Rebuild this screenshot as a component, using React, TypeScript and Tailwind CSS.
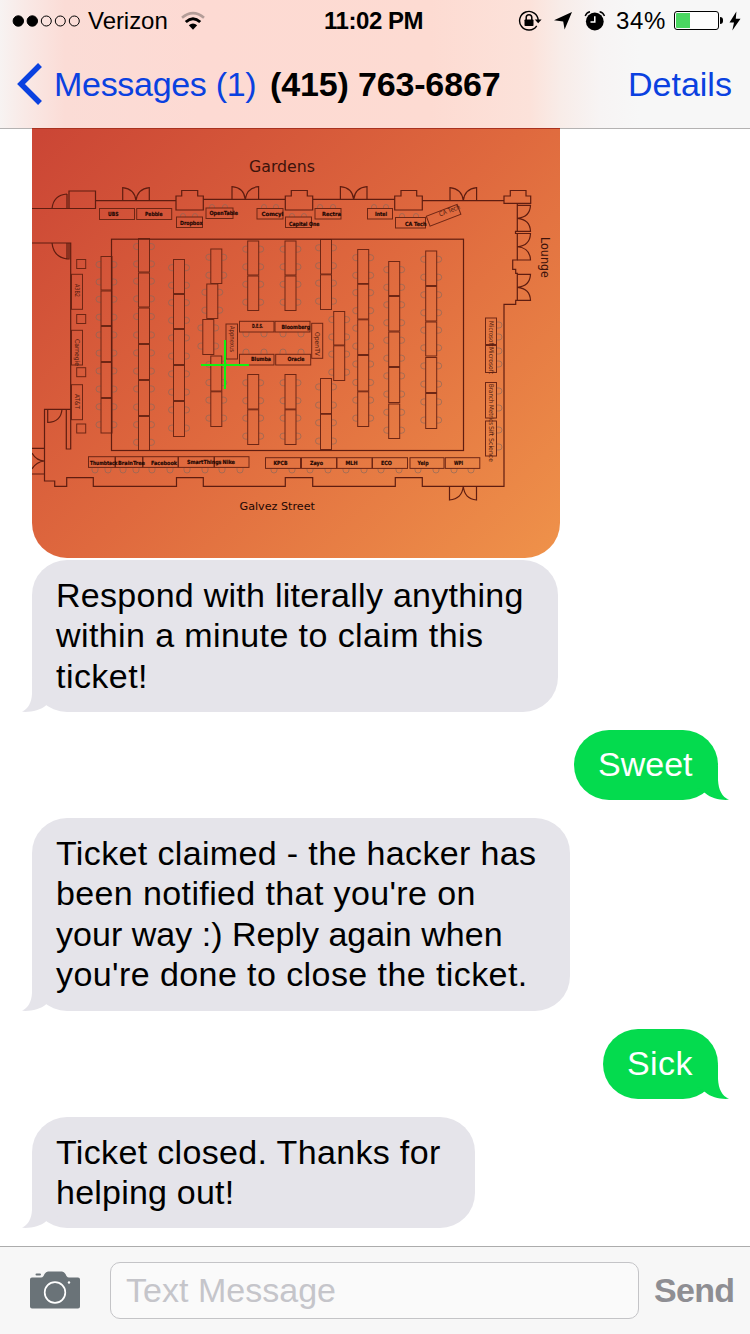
import React from "react";

type Column = { x: number; w?: number; tables: [number, number][] };

const columns: Column[] = [
  { x: 101, tables: [[256.5, 290], [291, 325.5], [326.5, 361.5], [362.5, 397.5], [398.5, 433]] },
  { x: 138.5, tables: [[238.5, 272], [273, 307], [308, 343.5], [344.5, 379.5], [380.5, 415.5], [416.5, 450.5]] },
  { x: 173.5, tables: [[259.5, 293.5], [294.5, 328.5], [329.5, 364.5], [365.5, 400.5], [401.5, 436.5]] },
  { x: 210.8, tables: [[249, 283.5], [356, 391], [391.8, 426.5]] },
  { x: 206.8, tables: [[284, 318.5]] },
  { x: 202.8, tables: [[319.5, 354.5]] },
  { x: 247.7, tables: [[241, 275], [276, 310.5], [374.5, 409], [409.8, 444.5]] },
  { x: 285, tables: [[241, 275], [276, 310.5], [374.5, 409], [409.8, 444.5]] },
  { x: 320.5, tables: [[239.5, 274], [274.8, 309.5], [378.5, 413.5], [414.3, 449.5]] },
  { x: 333.7, tables: [[311.5, 345], [345.8, 380.5]] },
  { x: 357.7, tables: [[249.5, 283.5], [284.3, 319], [319.8, 354.5], [355.5, 391], [391.8, 426.5]] },
  { x: 388.7, tables: [[261.5, 295.5], [296.5, 331], [332, 366.5], [367.5, 402.5], [404, 438.5]] },
  { x: 425.7, tables: [[251, 285.5], [286.5, 321], [322, 356], [357.5, 392.5], [393.5, 428.5]] },
];

// x, y, width, height
const booths: [number, number, number, number][] = [
  [99.5, 208.5, 35, 11], [136.7, 208.5, 35, 11], [176.5, 217, 26, 10.5], [206, 208, 27, 10.5],
  [257, 208.5, 26, 10.5], [285.5, 217, 26, 10.5], [315, 208.5, 26, 10.5], [367.5, 208.5, 25, 10.5], [395.5, 217.5, 30, 10.5],
  [239.5, 321.3, 34.5, 10.7], [275, 321.3, 35, 10.7], [239.5, 354.3, 34.5, 10.7], [275.7, 354.3, 35, 10.7],
  [226, 324, 11.5, 35], [311.7, 323.3, 11, 35],
  [88.5, 456.7, 26.5, 10.7], [115.5, 456.7, 27, 10.7], [143, 456.7, 35, 10.7], [178.5, 456.7, 35.5, 10.7], [214.5, 456.7, 34.5, 10.7],
  [265.5, 457.7, 35, 10.7], [301.5, 457.7, 35, 10.7], [337, 457.7, 35, 10.7], [372.5, 457.7, 35, 10.7], [410, 457.7, 34, 10.7], [445.3, 457.7, 34.5, 10.7],
  [71.5, 274.3, 11, 35], [71.5, 330.3, 11, 34.7], [71.5, 384.7, 11, 35],
  [485.5, 318, 11, 26.5], [485.5, 345.5, 11, 27], [485.5, 382.5, 11, 35.5], [485.5, 421, 11, 35],
  [76.7, 259.5, 9, 9], [76.7, 314.5, 9, 9], [76.7, 367.7, 9, 9], [76.7, 424, 9, 9],
];

const labels: { t: string; x: number; y: number; w: number }[] = [
  { t: "UBS", x: 108, y: 216, w: 10.5 }, { t: "Pebble", x: 145, y: 216, w: 17.5 },
  { t: "Dropbox", x: 180, y: 225, w: 22.5 }, { t: "OpenTable", x: 209.5, y: 215, w: 28.5 },
  { t: "Comcyl", x: 261.5, y: 216, w: 22 }, { t: "Capital One", x: 289, y: 225.5, w: 30.5 },
  { t: "Rectra", x: 322, y: 215.5, w: 19 }, { t: "Intel", x: 375, y: 215.5, w: 12 }, { t: "CA Tech", x: 405, y: 225.5, w: 21.5 },
  { t: "D.E.S.", x: 252, y: 328, w: 11 }, { t: "Bloomberg", x: 281.5, y: 329, w: 28.5 },
  { t: "Blumba", x: 251, y: 361, w: 20 }, { t: "Oracle", x: 287.5, y: 361, w: 17 },
  { t: "Thumbtack", x: 90, y: 464.5, w: 27.5 }, { t: "BrainTree", x: 118, y: 464.5, w: 27 }, { t: "Facebook", x: 151, y: 464.5, w: 26 },
  { t: "SmartThings", x: 187, y: 463.5, w: 34.5 }, { t: "Nike", x: 222.500, y: 463.5, w: 12.500 },
  { t: "KPCB", x: 273.5, y: 464.5, w: 14 }, { t: "Zayo", x: 310, y: 464.5, w: 13 }, { t: "MLH", x: 345.5, y: 464.5, w: 12 },
  { t: "ECO", x: 381, y: 464.5, w: 11 }, { t: "Yelp", x: 417.5, y: 464.5, w: 11 }, { t: "WPI", x: 454, y: 464.5, w: 9 },
];

const sideLabels: { t: string; x: number; y: number; w: number }[] = [
  { t: "A3B2", x: 75, y: 284, w: 13 }, { t: "Carnegie", x: 75, y: 339, w: 27 }, { t: "AT&T", x: 75, y: 394, w: 15 },
  { t: "Appnexus", x: 229.5, y: 326, w: 26 }, { t: "OpenTV", x: 315, y: 332, w: 24 },
  { t: "Microsoft", x: 489, y: 321, w: 25.500 }, { t: "Microsoft", x: 489, y: 347, w: 27 },
  { t: "Branch Metrics", x: 489, y: 384, w: 41 }, { t: "Sift Science", x: 489, y: 426, w: 36 },
];

const topDoors: [number, number, number][] = [
  [136, 187.7, 200.7], [245.3, 186.7, 199.3], [353.7, 186.7, 199.3], [463.3, 187.7, 200.7],
];

function FloorPlan() {
  return (
    <svg viewBox="32 129 528 429" width="528" height="429" className="block" fill="none">
      <defs>
        <linearGradient id="sunset" gradientUnits="userSpaceOnUse" x1="75" y1="100" x2="535" y2="580">
          <stop offset="0" stopColor="#cb4635" />
          <stop offset="0.5" stopColor="#df693e" />
          <stop offset="1" stopColor="#ef924a" />
        </linearGradient>
      </defs>
      <rect x="32" y="129" width="528" height="429" fill="url(#sunset)" />
      <g stroke="#80685e" strokeOpacity="0.75" strokeWidth="0.8">
        {columns.flatMap((c) =>
          c.tables.flatMap(([a, b]) =>
            [a + (b - a) * 0.24, a + (b - a) * 0.76].flatMap((y) => [
              <path key={`l${c.x}-${y}`} d={`M${c.x} ${y - 3}h-2a3 3 0 0 0 0 6h2`} />,
              <path key={`r${c.x}-${y}`} d={`M${c.x + 11} ${y - 3}h2a3 3 0 0 1 0 6h-2`} />,
            ])
          )
        )}
        {[95, 108, 123, 136, 152, 170, 187, 205, 222, 240, 274, 292, 310, 328, 346, 364, 381, 399, 418, 436, 454, 471].map((x) => (
          <path key={x} d={`M${x - 3} 468v2a3 3 0 0 0 6 0v-2`} />
        ))}
        {[212, 225, 264, 276, 320, 333, 374, 386].map((x) => (
          <path key={x} d={`M${x - 2.5} 208v-1a2.5 2.5 0 0 1 5 0v1`} />
        ))}
        {[183, 195, 292, 304, 402, 416].map((x) => (
          <path key={x} d={`M${x - 2.5} 217v-1a2.5 2.5 0 0 1 5 0v1`} />
        ))}
        {[246, 264, 283, 301].map((x) => (
          <path key={x} d={`M${x - 3} 332v2a3 3 0 0 0 6 0v-2M${x - 3} 354v-2a3 3 0 0 1 6 0v2`} />
        ))}
        {[325, 337, 351, 364, 391, 408, 430, 447].map((y) => (
          <path key={y} d={`M497 ${y - 3}h2a3 3 0 0 1 0 6h-2`} />
        ))}
      </g>
      <g stroke="#6e2614" strokeWidth="1">
        {columns.flatMap((c) =>
          c.tables.map(([a, b]) => <rect key={`${c.x}-${a}`} x={c.x} y={a} width="11" height={b - a} />)
        )}
        {booths.map(([x, y, w, h]) => (
          <rect key={`${x}-${y}`} x={x} y={y} width={w} height={h} />
        ))}
        <rect x="427" y="210" width="33" height="10.5" transform="rotate(-21 443.5 215)" />
      </g>
      <g stroke="#5f1d10" strokeWidth="1.2">
        <rect x="111.5" y="239.2" width="352" height="211.3" />
        <path d="M32 208.5H95.5V191H69V208.5M67 194V208.5M52 208.5Q53.5 195 67 194" />
        <path d="M95.5 200.7H176V196H181.7V190.5H197.7V196H203.3V210H176V200.7M203.3 199.3H285.3V196H291.3V190.5H307.3V196H312.7V210H285.3V199.3M312.7 199.3H394.7V196H401V190.5H416.7V196H422.3V210H394.7V199.3M422.3 200.7H504" />
        <path d="M504 203.3V196H510.3V190.5H526V196H530.7V203.3ZM517.3 203.3V231.3H515.5V233.5H517.3V260H512.7V269.3H515.7V273.3H517.3V300.3H515.7V304.3H504V486.3H422.3V477.7H395.3V486.3H312.7V477.7H285.3V486.3H203.3V477.7H176.5V486.3H93.3V477.7H66.7V486.3H54.7V481H44.5V409.3H71" />
        <path d="M32 243H70.7V449H66.3V409.3M67 243V259H69V243M52 243Q53.5 257 67 259M47.7 409.3V422.5Q61 422 62 409.3M32 448.3H44.5M32 474H44.5M32 453Q36 460.5 44.5 461Q36 462 32 469" />
        {topDoors.map(([x, t, b]) => (
          <path key={x} d={`M${x - 13.3} ${b}V${t}Q${x - 1.5} ${t + 1} ${x} ${b}Q${x + 1.5} ${t + 1} ${x + 13.3} ${t}V${b}`} />
        ))}
        <path d="M449.5 486.3V500Q462 499 463.3 486.3Q464.5 499 476.5 500V486.3" />
        {[[205.3, 231.3], [233.5, 260], [274.3, 300.3]].map(([a, b]) => (
          <path key={a} d={`M517.3 ${a}H530.5Q530 ${(a + b) / 2 - 1} 517.3 ${(a + b) / 2}Q530 ${(a + b) / 2 + 1} 530.5 ${b}H517.3`} />
        ))}
      </g>
      <g fill="#1d0703" className="font-['DejaVu_Sans','Open_Sans',sans-serif]">
        <text x="249" y="172" fontSize="16" textLength="66" lengthAdjust="spacingAndGlyphs" fill="#3d130b">Gardens</text>
        <text x="239.5" y="509.5" fontSize="10.5" textLength="75.5" lengthAdjust="spacingAndGlyphs">Galvez Street</text>
        <text transform="translate(541 237) rotate(90)" fontSize="11.5" textLength="41" lengthAdjust="spacingAndGlyphs" fill="#3d130b">Lounge</text>
        <g fontSize="5.6" fontWeight="700" stroke="#1d0703" strokeWidth="0.2">
          {labels.map((l) => (
            <text key={l.t} x={l.x} y={l.y} textLength={l.w} lengthAdjust="spacingAndGlyphs">{l.t}</text>
          ))}
        </g>
        <g fontSize="6.500" fill="#4f1a0e">
          {sideLabels.map((l) => (
            <text key={`${l.x}-${l.y}`} transform={`translate(${l.x} ${l.y}) rotate(90)`} textLength={l.w} lengthAdjust="spacingAndGlyphs">{l.t}</text>
          ))}
          <text transform="translate(440 216.5) rotate(-21)" textLength="22" lengthAdjust="spacingAndGlyphs">CA Tech</text>
        </g>
      </g>
      <path d="M201 365H249M225 340V389" stroke="#10f310" strokeWidth="2" />
    </svg>
  );
}

function Tail({ side }: { side: "left" | "right" }) {
  return side === "left" ? (
    <svg className="absolute -left-2.5 bottom-0" width="40" height="34" viewBox="0 0 40 34" fill="#e5e4ea">
      <path d="M10 0V16C9.500 25 6 31 0 33.8C9 34.4 18 32.500 24.500 27L40 20V0Z" />
    </svg>
  ) : (
    <svg className="absolute -right-[11px] bottom-0" width="40" height="34" viewBox="0 0 40 34" fill="#04db4e">
      <path d="M29 0V14C29.500 24 33 31 40 33.8C31 34.400 22.500 32.500 16 27L6 20V0Z" />
    </svg>
  );
}

function Incoming({ children, className }: { children: React.ReactNode; className: string }) {
  return (
    <div className={`relative ml-8 rounded-[35px] bg-[#e5e4ea] pl-6 text-black ${className}`}>
      <Tail side="left" />
      <p className="relative whitespace-nowrap pt-[14.6px] text-[34px] leading-[40.5px]">{children}</p>
    </div>
  );
}

function Outgoing({ children, className }: { children: React.ReactNode; className: string }) {
  return (
    <div className={`relative mr-8 h-[70px] self-end rounded-[35px] bg-[#04db4e] pl-6 pt-[14px] text-white ${className}`}>
      <Tail side="right" />
      <p className="relative whitespace-nowrap text-[34px] leading-[40.6px]">{children}</p>
    </div>
  );
}

function StatusBar() {
  return (
    <div className="flex h-10 items-center pt-px text-2xl">
      <svg className="ml-3" width="70" height="12" viewBox="0 0 70 12" stroke="#000" strokeWidth="1">
        <circle cx="6.300" cy="6" r="5.200" />
        <circle cx="20.300" cy="6" r="5.200" />
        <circle cx="34.300" cy="6" r="5" fill="none" />
        <circle cx="48.300" cy="6" r="5" fill="none" />
        <circle cx="62.300" cy="6" r="5" fill="none" />
      </svg>
      <span className="ml-[6px] w-[92px] tracking-[-0.05px]">Verizon</span>
      <svg width="26" height="20" viewBox="0 0 26 20" fill="none" strokeWidth="3">
        <path d="M2 6.800Q13 -2.600 24 6.800" stroke="#b49d98" strokeWidth="2.600" />
        <path d="M5.800 11Q13 4.600 20.200 11" stroke="#000" />
        <path d="M8.800 14.200Q13 10.600 17.200 14.200L13 18.800Z" fill="#000" />
      </svg>
      <span className="ml-[118px] w-[194px] font-bold tracking-[-0.45px]">11:02 PM</span>
      <svg width="24" height="22" viewBox="0 0 24 22" fill="none" stroke="#000" strokeWidth="1.400">
        <path d="M18.700 15.800A9.300 9.300 0 1 1 20.200 10.500" />
        <path d="M16.800 9.500H23.600L20.200 13.300Z" fill="#000" stroke="none" />
        <rect x="6.500" y="9.500" width="9" height="6.500" rx="0.800" fill="#000" stroke="none" />
        <path d="M8.200 10V7.500A2.800 2.800 0 0 1 13.800 7.500V10" strokeWidth="1.500" />
      </svg>
      <svg className="ml-3" width="18" height="18" viewBox="0 0 18 18">
        <path d="M18 0L10.600 17.600L9.200 9.400L0 8.200Z" />
      </svg>
      <svg className="ml-3" width="22" height="20" viewBox="0 0 22 20" fill="none">
        <circle cx="10.800" cy="10.500" r="8.900" fill="#000" />
        <path d="M10.800 5.200V11H6.500" stroke="#fff" strokeWidth="1.500" />
        <path d="M1.200 5Q2.500 1.500 6 0.800M15.600 0.800Q19.200 1.500 20.500 5" stroke="#000" strokeWidth="1.400" />
      </svg>
      <span className="ml-[10px] w-[58px] tracking-[0.6px]">34%</span>
      <div className="flex h-[19px] w-[45px] rounded-[3px] border border-black bg-[#fdfdfd] p-px">
        <div className="h-full w-[14px] rounded-l-[1px] bg-[#49d660]" />
      </div>
      <div className="ml-px h-[7px] w-[3px] rounded-r-full bg-black" />
      <svg className="ml-[6px]" width="12" height="20" viewBox="0 0 12 20">
        <path d="M7.400 0.500L0.500 11.500H5L3.300 19.500L11.500 7.800H6.800Z" />
      </svg>
    </div>
  );
}

export default function App() {
  return (
    <div className="flex h-[1334px] w-[750px] flex-col overflow-hidden bg-white font-['Liberation_Sans',Arial,sans-serif] text-black">
      <header className="flex h-32 shrink-0 flex-col bg-[linear-gradient(90deg,#f7f3f2_0px,#f9e9e6_25px,#fbdcd6_65px,#fddad3_200px,#fddbd2_430px,#fce2da_530px,#f8ece8_560px,#f7f4f4_600px,#f7f7f7_640px)]">
        <StatusBar />
        <nav className="flex h-[88px] items-center text-[34px] leading-10 text-[#0a41e0]">
          <svg className="ml-4" width="28" height="44" viewBox="0 0 28 44" fill="none" stroke="#0a41e0" strokeWidth="5.500">
            <path d="M24 3L5 22L24 41" />
          </svg>
          <span className="ml-[10px] w-[216px] whitespace-nowrap tracking-[-0.3px]">Messages (1)</span>
          <h1 className="w-[358px] whitespace-nowrap font-bold tracking-[-0.15px] text-black">(415) 763-6867</h1>
          <span>Details</span>
        </nav>
      </header>
      <div className="flex h-px shrink-0 bg-[#b4b2b2]">
        <div className="ml-8 w-[528px] bg-[#a93220]" />
      </div>

      <main className="flex min-h-0 flex-1 flex-col items-start overflow-hidden">
        <div className="ml-8 h-[429px] w-[528px] shrink-0 overflow-hidden rounded-b-[35px]">
          <FloorPlan />
        </div>
        <Incoming className="mt-[2px] h-[152px] w-[526px]">
          <span className="tracking-[0.27px]">Respond with literally anything</span><br />
          <span className="tracking-[0.4px]">within a minute to claim this</span><br />
          <span className="tracking-[0.45px]">ticket!</span>
        </Incoming>
        <Outgoing className="mt-[18px] w-[144px]">Sweet</Outgoing>
        <Incoming className="mt-[18px] h-[193px] w-[538px]">
          <span className="tracking-[0.36px]">Ticket claimed - the hacker has</span><br />
          <span className="tracking-[0.38px]">been notified that you're on</span><br />
          <span className="tracking-[0.02px]">your way :) Reply again when</span><br />
          <span className="tracking-[0.42px]">you're done to close the ticket.</span>
        </Incoming>
        <Outgoing className="mt-[18px] w-[115px] tracking-[0.4px]">Sick</Outgoing>
        <Incoming className="mt-[18px] h-[111px] w-[443px]">
          <span className="tracking-[0.34px]">Ticket closed. Thanks for</span><br />
          <span className="tracking-[0.22px]">helping out!</span>
        </Incoming>
      </main>

      <footer className="flex h-[88px] shrink-0 items-center border-t border-[#acacac] bg-[#f7f7f7]">
        <svg className="ml-[30px] -mt-0.5" width="50" height="38" viewBox="0 0 50 38" fill="#6a7378">
          <path d="M2 6.500H11C13 6.500 13.500 5 14.500 3Q16 0.500 18 0.500H32Q34 0.500 35.500 3C36.500 5 37 6.500 39 6.500H48Q50 6.500 50 8.500V35.500Q50 37.500 48 37.500H2Q0 37.500 0 35.500V8.500Q0 6.500 2 6.500Z" />
          <rect x="5.500" y="2.500" width="5.500" height="2" rx="1" />
          <circle cx="25" cy="21.500" r="10.300" fill="none" stroke="#fff" strokeWidth="1.700" />
          <circle cx="39" cy="11.500" r="1.200" fill="#fff" />
        </svg>
        <div className="ml-[30px] flex h-[57px] w-[529px] items-center rounded-[10px] border border-[#c4c4c7] bg-[#fafafa] pb-0.5 pl-[15px] text-[34px] leading-10 tracking-[0.02px] text-[#c5c5ca]">
          Text Message
        </div>
        <span className="-mt-0.5 ml-[15px] text-[34px] font-bold leading-10 tracking-[-0.7px] text-[#8e8e93]">Send</span>
      </footer>
    </div>
  );
}
